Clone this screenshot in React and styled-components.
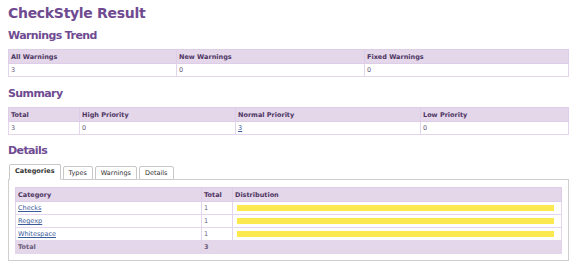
import React from 'react'
import styled, { createGlobalStyle } from 'styled-components'

const GlobalStyle = createGlobalStyle`
  body {
    margin: 0;
    background: #fff;
    font-family: "DejaVu Sans", Verdana, sans-serif;
    color: #5b4a6b;
  }
`

const Page = styled.div`
  display: flex;
  flex-direction: column;
  padding: 4px 7px 0 8px;
`

const Title = styled.h1`
  color: #6f4a91;
  font-size: 14px;
  letter-spacing: -0.3px;
  font-weight: bold;
  margin: 0 0 7px 0;
  line-height: 18px;
`

const Heading = styled.h2`
  color: #6f4a91;
  font-size: 11px;
  letter-spacing: -0.6px;
  font-weight: bold;
  margin: 0 0 6px 0;
  line-height: 14px;
`

const Table = styled.table`
  border-collapse: collapse;
  table-layout: fixed;
  width: 100%;
  border: 1px solid #e3d6ec;
  margin-bottom: ${props => props.gap || 0}px;
  font-size: 6.5px;
`

const Th = styled.th`
  background: #e3d7e9;
  color: #4e3563;
  text-align: left;
  font-weight: bold;
  height: 13px;
  padding: 0 2px;
  border: 1px solid #ddcde8;
  width: ${props => props.w || 'auto'};
`

const Td = styled.td`
  height: 12px;
  padding: 0 ${props => (props.bar ? 7 : 2)}px 0 ${props => (props.bar ? 4 : 2)}px;
  border: 1px solid #e3d6ec;
  color: #6a5a7a;
  background: ${props => (props.foot ? '#e3d7e9' : '#fff')};
  font-weight: ${props => (props.foot ? 'bold' : 'normal')};
`

const Link = styled.a`
  color: #3a5a9a;
  text-decoration: underline;
`

const Tabs = styled.div`
  display: flex;
  gap: 2px;
  padding-left: 1px;
  position: relative;
  z-index: 1;
`

const Tab = styled.div`
  font-size: 6.5px;
  font-weight: ${props => (props.active ? 'bold' : 'normal')};
  color: #333;
  border: 1px solid #c8c8c8;
  border-bottom: ${props => (props.active ? '1px solid #fff' : '1px solid #c8c8c8')};
  background: #fff;
  padding: 0 5px;
  height: ${props => (props.active ? 14 : 12)}px;
  line-height: 12px;
  margin-top: ${props => (props.active ? 0 : 2)}px;
  border-radius: 2px 2px 0 0;
`

const Panel = styled.div`
  border: 1px solid #cfcfcf;
  margin-top: -1px;
  padding: 7px 6px 6px 6px;
`

const Bar = styled.div`
  height: 6px;
  background: #fce94f;
`

const rows = ['Checks', 'Regexp', 'Whitespace']

export default function App() {
  return (
    <Page>
      <GlobalStyle />
      <Title>CheckStyle Result</Title>
      <Heading>Warnings Trend</Heading>
      <Table gap={10}>
        <thead>
          <tr>
            <Th w="163px">All Warnings</Th>
            <Th w="183px">New Warnings</Th>
            <Th>Fixed Warnings</Th>
          </tr>
        </thead>
        <tbody>
          <tr>
            <Td>3</Td>
            <Td>0</Td>
            <Td>0</Td>
          </tr>
        </tbody>
      </Table>
      <Heading>Summary</Heading>
      <Table gap={9}>
        <thead>
          <tr>
            <Th w="66px">Total</Th>
            <Th w="151px">High Priority</Th>
            <Th w="180px">Normal Priority</Th>
            <Th>Low Priority</Th>
          </tr>
        </thead>
        <tbody>
          <tr>
            <Td>3</Td>
            <Td>0</Td>
            <Td>
              <Link>3</Link>
            </Td>
            <Td>0</Td>
          </tr>
        </tbody>
      </Table>
      <Heading>Details</Heading>
      <Tabs>
        <Tab active>Categories</Tab>
        <Tab>Types</Tab>
        <Tab>Warnings</Tab>
        <Tab>Details</Tab>
      </Tabs>
      <Panel>
        <Table>
          <thead>
            <tr>
              <Th w="181px">Category</Th>
              <Th w="26px">Total</Th>
              <Th>Distribution</Th>
            </tr>
          </thead>
          <tbody>
            {rows.map(name => (
              <tr key={name}>
                <Td>
                  <Link>{name}</Link>
                </Td>
                <Td>1</Td>
                <Td bar>
                  <Bar />
                </Td>
              </tr>
            ))}
            <tr>
              <Td foot>Total</Td>
              <Td foot>3</Td>
              <Td foot />
            </tr>
          </tbody>
        </Table>
      </Panel>
    </Page>
  )
}
